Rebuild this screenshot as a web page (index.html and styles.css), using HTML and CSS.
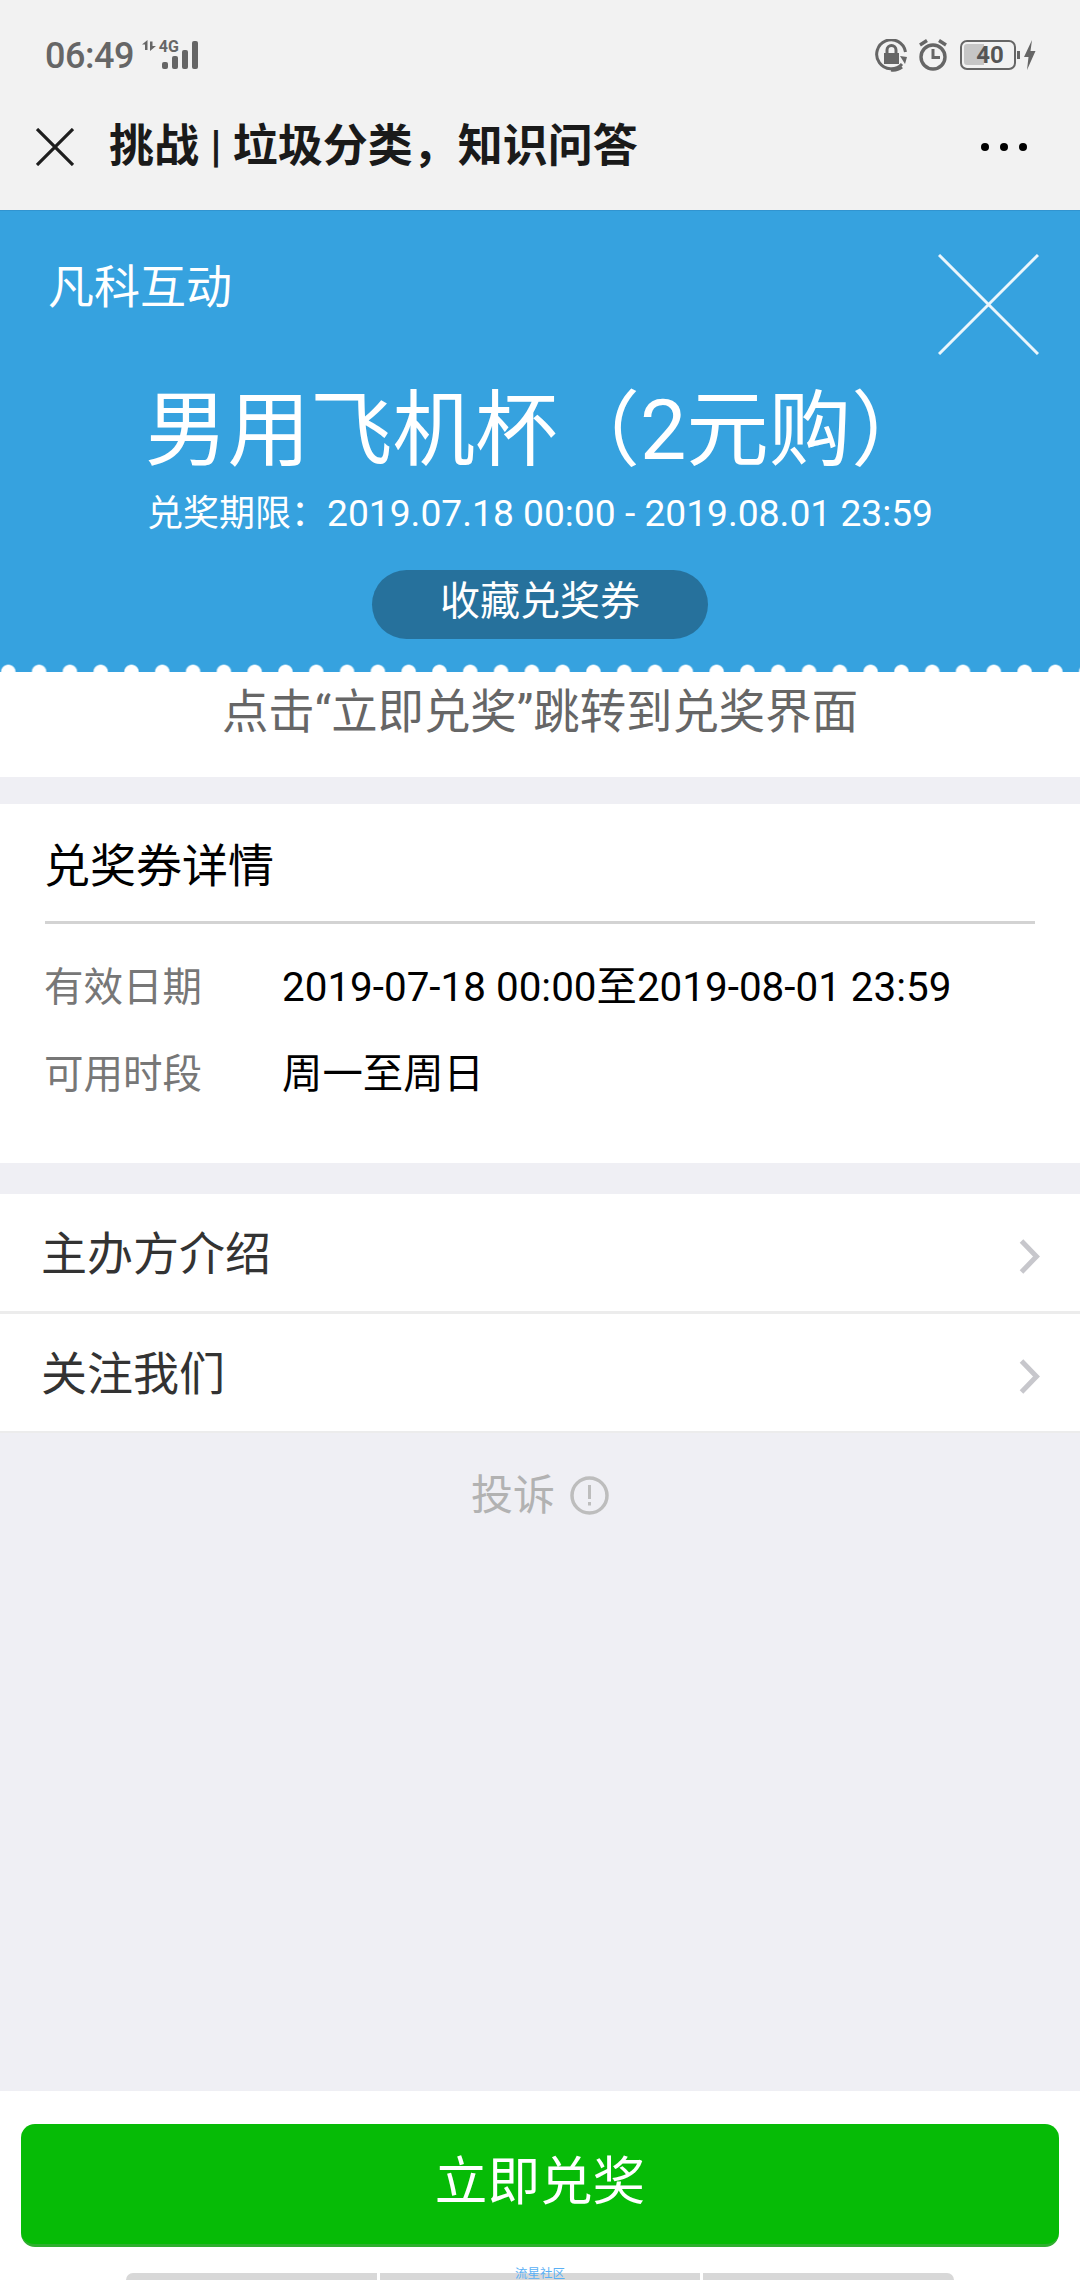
FILE: index.html
```html
<!DOCTYPE html>
<html lang="zh-CN">
<head>
    <meta charset="UTF-8">
    <meta name="viewport" content="width=device-width, initial-scale=1.0">
    <title>挑战 | 垃圾分类，知识问答</title>
    <link rel="stylesheet" href="styles.css">
</head>
<body>
    <div class="page">
        <div class="status-bar">
            <div class="status-left">
                <span class="time">06:49</span>
                <svg class="net-arrows" width="14" height="11" viewBox="0 0 14 11">
                    <path d="M5.500 0V10H3V4.500H0Z M8 11V1.500H10.500V6H14Z" fill="#666"/>
                </svg>
                <div class="signal">
                    <span class="net-type">4G</span>
                    <svg class="signal-bars" width="37" height="28" viewBox="0 0 37 28">
                        <rect x="1" y="21" width="6" height="7" rx="2" fill="#666"/>
                        <rect x="11" y="15" width="6" height="13" rx="2" fill="#666"/>
                        <rect x="21" y="9" width="6" height="19" rx="2" fill="#666"/>
                        <rect x="31" y="0" width="6" height="28" rx="2" fill="#666"/>
                    </svg>
                </div>
            </div>
            <div class="status-right">
                <svg width="33" height="33" viewBox="0 0 33 33">
                    <path d="M27 25A14.500 14.500 0 1 1 30.500 13" fill="none" stroke="#666" stroke-width="3"/>
                    <path d="M25 17L32 18L30 25Z" fill="#666"/>
                    <path d="M27 28A14.500 14.500 0 0 1 16 31" fill="none" stroke="#666" stroke-width="3"/>
                    <rect x="9" y="14" width="15" height="11" fill="#666"/>
                    <path d="M12 14V11A4.500 4.500 0 0 1 21 11V14" fill="none" stroke="#666" stroke-width="3"/>
                </svg>
                <svg class="alarm" width="30" height="32" viewBox="0 0 30 32">
                    <circle cx="15" cy="18" r="12" fill="none" stroke="#666" stroke-width="3.400"/>
                    <path d="M15 10V18.500H22" fill="none" stroke="#666" stroke-width="3"/>
                    <path d="M2 6L9 1.500M28 6L21 1.500" fill="none" stroke="#666" stroke-width="3.400"/>
                </svg>
                <div class="battery">
                    <div class="battery-fill"></div>
                    <span class="battery-num">40</span>
                </div>
                <div class="battery-nub"></div>
                <svg class="bolt" width="13" height="30" viewBox="0 0 13 30">
                    <path d="M9 0L1 17H5.500L4 30L12.500 11H7.500Z" fill="#666"/>
                </svg>
            </div>
        </div>

        <div class="nav-bar">
            <svg class="nav-close" width="38" height="38" viewBox="0 0 38 38">
                <path d="M1 1L37 37M37 1L1 37" fill="none" stroke="#1e1e1e" stroke-width="3.200"/>
            </svg>
            <div class="nav-title">挑战 | 垃圾分类，知识问答</div>
            <div class="nav-more"><i></i><i></i><i></i></div>
        </div>

        <div class="ticket">
            <div class="ticket-head">
                <div class="ticket-org">凡科互动</div>
                <svg class="ticket-close" width="101" height="101" viewBox="0 0 101 101">
                    <path d="M1 1L100 100M100 1L1 100" fill="none" stroke="#fff" stroke-opacity="0.900" stroke-width="3"/>
                </svg>
            </div>
            <div class="ticket-name">男用飞机杯（2元购）</div>
            <div class="ticket-date">兑奖期限：<span class="ticket-range">2019.07.18 00:00 - 2019.08.01 23:59</span></div>
            <div class="ticket-save">收藏兑奖券</div>
            <div class="ticket-edge"></div>
        </div>

        <div class="notice">点击“立即兑奖”跳转到兑奖界面</div>

        <div class="detail">
            <div class="detail-title">兑奖券详情</div>
            <div class="detail-row first">
                <span class="detail-label">有效日期</span>
                <span class="detail-value">2019-07-18 00:00至2019-08-01 23:59</span>
            </div>
            <div class="detail-row">
                <span class="detail-label">可用时段</span>
                <span class="detail-value">周一至周日</span>
            </div>
        </div>

        <div class="links">
            <div class="link-row">
                <span class="link-text">主办方介绍</span>
                <svg class="chevron" width="21" height="35" viewBox="0 0 21 35">
                    <path d="M2.500 2L17.500 17.500L2.500 33" fill="none" stroke="#c7c7cc" stroke-width="5"/>
                </svg>
            </div>
            <div class="link-row">
                <span class="link-text">关注我们</span>
                <svg class="chevron" width="21" height="35" viewBox="0 0 21 35">
                    <path d="M2.500 2L17.500 17.500L2.500 33" fill="none" stroke="#c7c7cc" stroke-width="5"/>
                </svg>
            </div>
        </div>

        <div class="complain">
            <span>投诉</span>
            <svg width="39" height="39" viewBox="0 0 39 39">
                <circle cx="19.500" cy="19.500" r="17.500" fill="none" stroke="#bdbdbd" stroke-width="3.500"/>
                <rect x="18" y="9" width="3" height="14" fill="#bdbdbd"/>
                <rect x="18" y="26" width="3" height="3.500" fill="#bdbdbd"/>
            </svg>
        </div>

        <div class="footer">
            <div class="redeem">立即兑奖</div>
            <div class="tabs">
                <div class="tab side"></div>
                <div class="tab middle"></div>
                <div class="tab side"></div>
                <span class="watermark">流星社区</span>
            </div>
        </div>
    </div>
</body>
</html>
```

FILE: styles.css
```css
* {
    box-sizing: border-box;
}

body {
    margin: 0;
    background-color: #efeff4;
    font-family: Roboto, "Noto Sans CJK SC", sans-serif;
}

.page {
    display: flex;
    flex-direction: column;
    width: 1080px;
    height: 2280px;
    overflow: hidden;
}

/* status bar */
.status-bar {
    display: flex;
    justify-content: space-between;
    height: 84px;
    padding: 39px 44px 0 45px;
    background-color: #f2f2f2;
}

.status-left {
    display: flex;
    align-items: flex-start;
}

.time {
    font-size: 36px;
    font-weight: 500;
    line-height: 34px;
    letter-spacing: -0.5px;
    color: #666;
}

.net-arrows {
    margin: 1px 0 0 8px;
}

.signal {
    position: relative;
    margin: 2px 0 0 5px;
    width: 37px;
    height: 28px;
}

.net-type {
    position: absolute;
    top: 0;
    left: -2px;
    font-size: 16px;
    font-weight: 700;
    line-height: 12px;
    color: #666;
}

.signal-bars {
    display: block;
}

.status-right {
    display: flex;
    align-items: flex-start;
}

.alarm {
    margin-left: 10px;
}

.battery {
    position: relative;
    display: flex;
    justify-content: center;
    align-items: center;
    width: 56px;
    height: 30px;
    margin: 1px 0 0 12px;
    padding-left: 4px;
    border: 2.500px solid #666;
    border-radius: 7px;
}

.battery-fill {
    position: absolute;
    top: 2px;
    left: 2px;
    width: 20px;
    height: 21px;
    border-radius: 3px 0 0 3px;
    background-color: #c6c6c6;
}

.battery-num {
    position: relative;
    font-size: 24px;
    font-weight: 700;
    line-height: 24px;
    color: #555;
}

.battery-nub {
    width: 3px;
    height: 8px;
    margin: 12px 0 0 1px;
    background-color: #666;
}

.bolt {
    margin: 1px 0 0 3px;
}

/* title bar */
.nav-bar {
    display: flex;
    align-items: center;
    height: 126px;
    padding: 0 53px 0 36px;
    background-color: #f2f2f2;
}

.nav-title {
    flex: 1;
    margin-left: 35px;
    font-size: 45px;
    font-weight: 700;
    line-height: 60px;
    color: #1a1a1a;
}

.nav-more {
    display: flex;
    gap: 11px;
}

.nav-more i {
    width: 8px;
    height: 8px;
    border-radius: 50%;
    background-color: #000;
}

/* blue ticket */
.ticket {
    display: flex;
    flex-direction: column;
    border-top: 1px solid #3194d0;
    background-color: #36a2df;
    color: #fff;
}

.ticket-head {
    display: flex;
    justify-content: space-between;
    padding: 43px 41px 0 48px;
}

.ticket-org {
    margin-top: 3px;
    font-size: 46px;
    line-height: 60px;
}

.ticket-name {
    margin: 26px 0 0 145px;
    font-size: 82.500px;
    line-height: 100px;
    white-space: nowrap;
}

.ticket-date {
    height: 44px;
    margin: 10px 0 0 147px;
    font-size: 36px;
    line-height: 44px;
    white-space: nowrap;
}

.ticket-range {
    font-size: 37.200px;
}

.ticket-save {
    align-self: center;
    width: 336px;
    height: 69px;
    margin-top: 35px;
    border-radius: 35px;
    background-color: #26719c;
    font-size: 40px;
    line-height: 64px;
    text-align: center;
}

.ticket-edge {
    height: 8px;
    margin-top: 25px;
    background-image: radial-gradient(circle at 50% 100%, #fff 6.500px, rgba(255, 255, 255, 0) 8px);
    background-size: 30.800px 8px;
    background-position: -7.100px 0;
}

.notice {
    height: 105px;
    background-color: #fff;
    font-size: 46.400px;
    line-height: 80px;
    text-align: center;
    color: #666;
}

/* details card */
.detail {
    margin-top: 27px;
    padding: 32px 45px 58px;
    background-color: #fff;
}

.detail-title {
    padding-bottom: 25px;
    border-bottom: 3px solid #d3d3d3;
    font-size: 46px;
    line-height: 60px;
    text-indent: -1px;
    color: #000;
}

.detail-row {
    display: flex;
    height: 60px;
    margin: 27px 0 0 -1px;
    font-size: 40.400px;
    line-height: 60px;
}

.detail-row.first {
    margin-top: 34px;
}

.detail-label {
    width: 238px;
    font-size: 39.500px;
    color: #777;
}

.detail-value {
    color: #000;
}

/* links */
.links {
    margin-top: 31px;
    background-color: #fff;
}

.link-row {
    display: flex;
    justify-content: space-between;
    align-items: center;
    height: 120px;
    padding: 0 40px 0 41px;
    border-bottom: 3px solid #ececec;
    font-size: 46px;
    color: #333;
}

.link-row:last-child {
    height: 119px;
    border-bottom-width: 2px;
}

.link-text {
    margin-bottom: 6px;
}

.chevron {
    margin-top: 8px;
}

.complain {
    display: flex;
    flex: 1;
    justify-content: center;
    align-items: flex-start;
    gap: 15px;
    padding-top: 33px;
    font-size: 42px;
    line-height: 60px;
    color: #b2b2b2;
}

.complain svg {
    margin-top: 10px;
}

/* bottom button */
.footer {
    height: 189px;
    padding: 33px 21px 0;
    background-color: #fff;
}

.redeem {
    height: 123px;
    border-bottom: 3px solid #2fae2f;
    border-radius: 14px;
    background-color: #06bb06;
    font-size: 52.600px;
    line-height: 116px;
    text-align: center;
    color: #fff;
}

.tabs {
    position: relative;
    display: flex;
    gap: 3px;
    height: 7px;
    margin: 26px 0 0 105px;
}

.tab {
    background-color: #d8d8d8;
}

.tab.side {
    width: 251px;
    border-radius: 7px 0 0 0;
}

.tab.side:nth-child(3) {
    border-radius: 0 7px 0 0;
}

.tab.middle {
    width: 320px;
}

.watermark {
    position: absolute;
    top: -5px;
    left: 389px;
    font-size: 12.500px;
    line-height: 12px;
    white-space: nowrap;
    color: #5ab0f5;
}
```
